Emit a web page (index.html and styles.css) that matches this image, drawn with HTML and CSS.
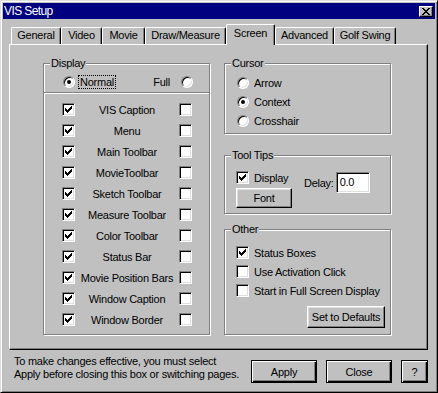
FILE: index.html
```html
<!DOCTYPE html>
<html>
<head>
<meta charset="utf-8">
<title>VIS Setup</title>
<link rel="stylesheet" href="styles.css">
</head>
<body>
<div class="window">
  <div class="titlebar">
    <span class="title">VIS Setup</span>
    <span class="close-btn">
      <svg class="x-icon" width="8" height="7" viewBox="0 0 8 7" shape-rendering="crispEdges">
        <rect x="0" y="0" width="2" height="1"/><rect x="6" y="0" width="2" height="1"/>
        <rect x="1" y="1" width="2" height="1"/><rect x="5" y="1" width="2" height="1"/>
        <rect x="2" y="2" width="4" height="1"/>
        <rect x="3" y="3" width="2" height="1"/>
        <rect x="2" y="4" width="4" height="1"/>
        <rect x="1" y="5" width="2" height="1"/><rect x="5" y="5" width="2" height="1"/>
        <rect x="0" y="6" width="2" height="1"/><rect x="6" y="6" width="2" height="1"/>
      </svg>
    </span>
  </div>

  <div class="tabs">
    <div class="tab w-general">General</div>
    <div class="tab w-video">Video</div>
    <div class="tab w-movie">Movie</div>
    <div class="tab w-draw">Draw/Measure</div>
    <div class="tab tab-active w-screen">Screen</div>
    <div class="tab w-advanced">Advanced</div>
    <div class="tab w-golf">Golf Swing</div>
  </div>

  <div class="panel">
    <div class="group display">
      <span class="legend">Display</span>
      <div class="mode-row">
        <span class="radio on"><span class="dot"></span></span>
        <span class="focus">Normal</span>
        <span class="full-label">Full</span>
        <span class="radio full-radio"></span>
      </div>
      <div class="sep"></div>
      <div class="rows">
        <div class="crow"><span class="check"><svg class="tick" width="7" height="7" viewBox="0 0 7 7" shape-rendering="crispEdges"><path d="M0 2V5H1V6H2V7H3V6H4V5H5V4H6V3H7V0H6V1H5V2H4V3H3V4H2V3H1V2Z"/></svg></span><span class="clabel">VIS Caption</span><span class="check"></span></div>
        <div class="crow"><span class="check"><svg class="tick" width="7" height="7" viewBox="0 0 7 7" shape-rendering="crispEdges"><path d="M0 2V5H1V6H2V7H3V6H4V5H5V4H6V3H7V0H6V1H5V2H4V3H3V4H2V3H1V2Z"/></svg></span><span class="clabel">Menu</span><span class="check"></span></div>
        <div class="crow"><span class="check"><svg class="tick" width="7" height="7" viewBox="0 0 7 7" shape-rendering="crispEdges"><path d="M0 2V5H1V6H2V7H3V6H4V5H5V4H6V3H7V0H6V1H5V2H4V3H3V4H2V3H1V2Z"/></svg></span><span class="clabel">Main Toolbar</span><span class="check"></span></div>
        <div class="crow"><span class="check"><svg class="tick" width="7" height="7" viewBox="0 0 7 7" shape-rendering="crispEdges"><path d="M0 2V5H1V6H2V7H3V6H4V5H5V4H6V3H7V0H6V1H5V2H4V3H3V4H2V3H1V2Z"/></svg></span><span class="clabel">MovieToolbar</span><span class="check"></span></div>
        <div class="crow"><span class="check"><svg class="tick" width="7" height="7" viewBox="0 0 7 7" shape-rendering="crispEdges"><path d="M0 2V5H1V6H2V7H3V6H4V5H5V4H6V3H7V0H6V1H5V2H4V3H3V4H2V3H1V2Z"/></svg></span><span class="clabel">Sketch Toolbar</span><span class="check"></span></div>
        <div class="crow"><span class="check"><svg class="tick" width="7" height="7" viewBox="0 0 7 7" shape-rendering="crispEdges"><path d="M0 2V5H1V6H2V7H3V6H4V5H5V4H6V3H7V0H6V1H5V2H4V3H3V4H2V3H1V2Z"/></svg></span><span class="clabel">Measure Toolbar</span><span class="check"></span></div>
        <div class="crow"><span class="check"><svg class="tick" width="7" height="7" viewBox="0 0 7 7" shape-rendering="crispEdges"><path d="M0 2V5H1V6H2V7H3V6H4V5H5V4H6V3H7V0H6V1H5V2H4V3H3V4H2V3H1V2Z"/></svg></span><span class="clabel">Color Toolbar</span><span class="check"></span></div>
        <div class="crow"><span class="check"><svg class="tick" width="7" height="7" viewBox="0 0 7 7" shape-rendering="crispEdges"><path d="M0 2V5H1V6H2V7H3V6H4V5H5V4H6V3H7V0H6V1H5V2H4V3H3V4H2V3H1V2Z"/></svg></span><span class="clabel">Status Bar</span><span class="check"></span></div>
        <div class="crow"><span class="check"><svg class="tick" width="7" height="7" viewBox="0 0 7 7" shape-rendering="crispEdges"><path d="M0 2V5H1V6H2V7H3V6H4V5H5V4H6V3H7V0H6V1H5V2H4V3H3V4H2V3H1V2Z"/></svg></span><span class="clabel">Movie Position Bars</span><span class="check"></span></div>
        <div class="crow"><span class="check"><svg class="tick" width="7" height="7" viewBox="0 0 7 7" shape-rendering="crispEdges"><path d="M0 2V5H1V6H2V7H3V6H4V5H5V4H6V3H7V0H6V1H5V2H4V3H3V4H2V3H1V2Z"/></svg></span><span class="clabel">Window Caption</span><span class="check"></span></div>
        <div class="crow"><span class="check"><svg class="tick" width="7" height="7" viewBox="0 0 7 7" shape-rendering="crispEdges"><path d="M0 2V5H1V6H2V7H3V6H4V5H5V4H6V3H7V0H6V1H5V2H4V3H3V4H2V3H1V2Z"/></svg></span><span class="clabel">Window Border</span><span class="check"></span></div>
      </div>
    </div>

    <div class="rightcol">
      <div class="group cursor">
        <span class="legend">Cursor</span>
        <div class="rrow"><span class="radio"></span><span>Arrow</span></div>
        <div class="rrow"><span class="radio on"><span class="dot"></span></span><span>Context</span></div>
        <div class="rrow"><span class="radio"></span><span>Crosshair</span></div>
      </div>

      <div class="group tooltips">
        <span class="legend">Tool Tips</span>
        <div class="tt-left">
          <div class="tt-row"><span class="check"><svg class="tick" width="7" height="7" viewBox="0 0 7 7" shape-rendering="crispEdges"><path d="M0 2V5H1V6H2V7H3V6H4V5H5V4H6V3H7V0H6V1H5V2H4V3H3V4H2V3H1V2Z"/></svg></span><span>Display</span></div>
          <div class="btn font-btn">Font</div>
        </div>
        <div class="tt-right">
          <span>Delay:</span>
          <span class="input">0.0</span>
        </div>
      </div>

      <div class="group other">
        <span class="legend">Other</span>
        <div class="orow"><span class="check"><svg class="tick" width="7" height="7" viewBox="0 0 7 7" shape-rendering="crispEdges"><path d="M0 2V5H1V6H2V7H3V6H4V5H5V4H6V3H7V0H6V1H5V2H4V3H3V4H2V3H1V2Z"/></svg></span><span>Status Boxes</span></div>
        <div class="orow"><span class="check"></span><span>Use Activation Click</span></div>
        <div class="orow"><span class="check"></span><span>Start in Full Screen Display</span></div>
        <div class="btn defaults-btn">Set to Defaults</div>
      </div>
    </div>
  </div>

  <div class="footer">
    <div class="note">To make changes effective, you must select<br>Apply before closing this box or switching pages.</div>
    <div class="btn dbtn apply-btn">Apply</div>
    <div class="btn dbtn close-dlg-btn">Close</div>
    <div class="btn dbtn help-btn">?</div>
  </div>
</div>
</body>
</html>
```

FILE: styles.css
```css
html, body {
  margin: 0;
  padding: 0;
  background: #c0c0c0;
}

body {
  font-family: "Liberation Sans", Arial, sans-serif;
  font-size: 11px;
  letter-spacing: -0.25px;
  color: #000;
}

.window {
  width: 438px;
  height: 393px;
  box-sizing: border-box;
  background: #c0c0c0;
  border: 1px solid;
  border-color: #dfdfdf #000 #000 #dfdfdf;
  box-shadow: inset 1px 1px #fff, inset -1px -1px #808080;
  padding: 2px;
  display: flex;
  flex-direction: column;
}

/* Title bar */
.titlebar {
  height: 16px;
  background: #000080;
  color: #fff;
  display: flex;
  align-items: center;
  justify-content: space-between;
  padding: 0 2px 0 1px;
  font-size: 12px;
  letter-spacing: -0.6px;
}

.title {
  line-height: 16px;
}

.close-btn {
  width: 14px;
  height: 11px;
  box-sizing: border-box;
  background: #c0c0c0;
  border: 1px solid;
  border-color: #fff #000 #000 #fff;
  box-shadow: inset -1px -1px #808080;
  display: flex;
  align-items: center;
  justify-content: center;
}

.x-icon {
  display: block;
  fill: #000;
}

/* Tabs */
.tabs {
  display: flex;
  align-items: flex-end;
  height: 25px;
  padding-left: 8px;
}

.tab {
  height: 17px;
  box-sizing: border-box;
  line-height: 15px;
  text-align: center;
  border-top: 1px solid #fff;
  border-left: 1px solid #fff;
  border-right: 1px solid #000;
  box-shadow: inset -1px 0 #808080;
  border-radius: 2px 2px 0 0;
  background: #c0c0c0;
  white-space: nowrap;
}

.tab-active {
  height: 21px;
  margin-bottom: -1px;
  padding-top: 1px;
  position: relative;
  z-index: 1;
}

.w-general { width: 50px; }
.w-video { width: 41px; }
.w-movie { width: 43px; }
.w-draw { width: 81px; }
.w-screen { width: 49px; }
.w-advanced { width: 59px; }
.w-golf { width: 62px; }

/* Panel */
.panel {
  margin-left: 6px;
  width: 419px;
  height: 306px;
  box-sizing: border-box;
  border: 1px solid;
  border-color: #fff #000 #000 #fff;
  box-shadow: inset -1px -1px #808080;
  padding: 18px 0 0 33px;
  display: flex;
  align-items: flex-start;
  gap: 14px;
}

.group {
  position: relative;
  box-sizing: border-box;
  width: 167px;
  border: 1px solid #808080;
  box-shadow: inset 1px 1px #fff, 1px 1px #fff;
}

.legend {
  position: absolute;
  top: -7px;
  left: 6px;
  padding: 0 1px;
  line-height: 13px;
  background: #c0c0c0;
}

/* Display group */
.display {
  height: 272px;
}

.mode-row {
  display: flex;
  align-items: center;
  height: 14px;
  padding: 11px 16px 3px 19px;
}

.focus {
  margin-left: 3px;
  height: 14px;
  box-sizing: border-box;
  border: 1px dotted #000;
  padding: 0 1px;
  line-height: 12px;
}

.full-label {
  margin-left: auto;
}

.full-radio {
  margin-left: 11px;
}

.sep {
  border-top: 1px solid #808080;
  border-bottom: 1px solid #fff;
}

.rows {
  padding: 5px 17px 0 18px;
}

.crow {
  display: flex;
  align-items: center;
  height: 21px;
}

.clabel {
  flex: 1;
  text-align: center;
  white-space: nowrap;
}

/* Controls */
.check {
  width: 13px;
  height: 13px;
  flex: none;
  box-sizing: border-box;
  background: #fff;
  border: 1px solid;
  border-color: #808080 #fff #fff #808080;
  box-shadow: inset 1px 1px #000, inset -1px -1px #dfdfdf;
  display: flex;
  align-items: center;
  justify-content: center;
}

.tick {
  display: block;
  fill: #000;
}

.radio {
  width: 12px;
  height: 12px;
  flex: none;
  box-sizing: border-box;
  border-radius: 50%;
  background: #fff;
  border: 1px solid;
  border-color: #808080 #fff #fff #808080;
  box-shadow: inset 1px 1px #000, inset -1px -1px #dfdfdf;
  display: flex;
  align-items: center;
  justify-content: center;
}

.dot {
  width: 4px;
  height: 4px;
  border-radius: 50%;
  background: #000;
}

.btn {
  box-sizing: border-box;
  background: #c0c0c0;
  border: 1px solid;
  border-color: #fff #000 #000 #fff;
  box-shadow: inset -1px -1px #808080, inset 1px 1px #dfdfdf;
  display: flex;
  align-items: center;
  justify-content: center;
  white-space: nowrap;
}

/* Right column */
.rightcol {
  width: 167px;
  display: flex;
  flex-direction: column;
}

.cursor {
  height: 71px;
  padding: 9px 0 0 12px;
}

.rrow {
  display: flex;
  align-items: center;
  gap: 5px;
  height: 19px;
}

.tooltips {
  margin-top: 21px;
  height: 59px;
  padding: 13px 0 0 11px;
  display: flex;
  align-items: flex-start;
}

.tt-left {
  width: 56px;
  display: flex;
  flex-direction: column;
}

.tt-row {
  display: flex;
  align-items: center;
  gap: 5px;
  height: 17px;
  white-space: nowrap;
}

.font-btn {
  margin-top: 2px;
  width: 56px;
  height: 20px;
}

.tt-right {
  margin-left: 12px;
  margin-top: 3px;
  display: flex;
  align-items: center;
  gap: 2px;
}

.input {
  width: 34px;
  height: 21px;
  box-sizing: border-box;
  background: #fff;
  border: 1px solid;
  border-color: #808080 #fff #fff #808080;
  box-shadow: inset 1px 1px #000, inset -1px -1px #dfdfdf;
  padding-left: 3px;
  line-height: 19px;
}

.other {
  margin-top: 15px;
  height: 106px;
  padding: 13px 5px 0 11px;
  display: flex;
  flex-direction: column;
}

.orow {
  display: flex;
  align-items: center;
  gap: 5px;
  height: 19px;
  white-space: nowrap;
}

.defaults-btn {
  align-self: flex-end;
  margin-top: 6px;
  width: 78px;
  height: 22px;
}

/* Footer */
.footer {
  display: flex;
  align-items: flex-start;
  padding: 5px 7px 0 11px;
}

.note {
  line-height: 13px;
  white-space: nowrap;
}

.dbtn {
  margin-top: 5px;
  height: 23px;
  border: 1px solid #000;
  box-shadow: inset 1px 1px #fff, inset -1px -1px #000, inset -2px -2px #808080;
}

.apply-btn {
  margin-left: auto;
  width: 66px;
}

.close-dlg-btn {
  margin-left: 9px;
  width: 66px;
}

.help-btn {
  margin-left: 9px;
  width: 27px;
}
```
